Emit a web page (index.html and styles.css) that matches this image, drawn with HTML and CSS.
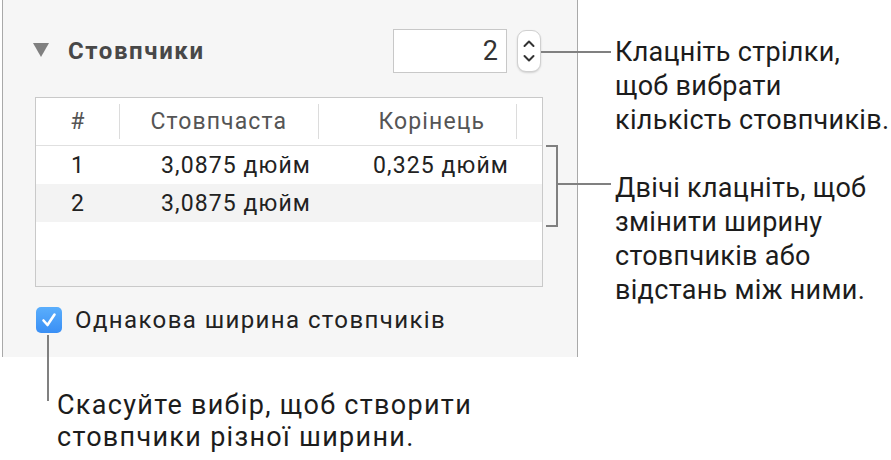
FILE: index.html
```html
<!DOCTYPE html>
<html lang="uk">
  <head>
    <meta charset="UTF-8" />
    <meta name="viewport" content="width=device-width, initial-scale=1.0" />
    <title>Стовпчики</title>
    <link rel="stylesheet" href="styles.css">
  </head>
  <body>
    <div class="page">
      <div class="top">
        <section class="panel">
          <div class="panel-head">
            <svg class="disclosure" width="16" height="14" viewBox="0 0 16 14">
              <polygon points="0,0 16,0 8,14" fill="#808080" />
            </svg>
            <h2 class="panel-title">Стовпчики</h2>
            <div class="count">2</div>
            <div class="stepper">
              <svg width="24" height="42" viewBox="0 0 24 42">
                <polyline points="7.5,16 12,11.5 16.5,16" fill="none" stroke="#333" stroke-width="2" stroke-linecap="round" stroke-linejoin="round" />
                <polyline points="7.5,26 12,30.5 16.5,26" fill="none" stroke="#333" stroke-width="2" stroke-linecap="round" stroke-linejoin="round" />
              </svg>
            </div>
          </div>

          <div class="cols">
            <div class="cols-row cols-head">
              <div class="cell c-num">#</div>
              <div class="cell c-width">Стовпчаста</div>
              <div class="cell c-gap">Корінець</div>
              <div class="cell c-rest"></div>
            </div>
            <div class="cols-row">
              <div class="cell c-num">1</div>
              <div class="cell c-width">3,0875 дюйм</div>
              <div class="cell c-gap">0,325 дюйм</div>
            </div>
            <div class="cols-row alt">
              <div class="cell c-num">2</div>
              <div class="cell c-width">3,0875 дюйм</div>
              <div class="cell c-gap"></div>
            </div>
            <div class="cols-row"></div>
            <div class="cols-row alt short"></div>
          </div>

          <label class="check">
            <span class="check-box">
              <svg width="26" height="26" viewBox="0 0 26 26">
                <polyline points="7.5,13.5 11.5,18 18.5,7.5" fill="none" stroke="#fff" stroke-width="2.6" stroke-linecap="round" stroke-linejoin="round" />
              </svg>
            </span>
            Однакова ширина стовпчиків
          </label>
        </section>

        <div class="notes">
          <p class="note note-arrows">Клацніть стрілки,<br />щоб вибрати<br />кількість стовпчиків.</p>
          <p class="note note-table">Двічі клацніть, щоб<br />змінити ширину<br />стовпчиків або<br />відстань між ними.</p>
        </div>
      </div>

      <p class="note note-check">Скасуйте вибір, щоб створити<br />стовпчики різної ширини.</p>
    </div>
  </body>
</html>
```

FILE: styles.css
```css
* {
  margin: 0px;
  box-sizing: border-box;
}

body {
  background-color: #fff;
  font-family: Roboto, "Liberation Sans", sans-serif;
}

.page {
  width: 891px;
  height: 460px;
  overflow: hidden;
}

.top {
  display: grid;
  grid-template-columns: 578px 1fr;
}

/* inspector panel */

.panel {
  width: 576px;
  height: 357px;
  margin-left: 2px;
  padding: 29px 34px 0px 32px;
  background-color: #f6f6f6;
  border-left: 1px solid #a9a9a9;
  border-right: 1px solid #a9a9a9;
}

.panel-head {
  display: flex;
  align-items: center;
  height: 44px;
}

.disclosure {
  margin-left: -2px;
  margin-top: -2px;
}

.panel-title {
  margin-left: 19px;
  font-size: 24px;
  font-weight: 700;
  letter-spacing: 1.6px;
  color: #484848;
}

.count {
  margin-left: auto;
  width: 114px;
  height: 44px;
  padding-right: 8px;
  background-color: #fff;
  border: 1px solid #c8c8c8;
  text-align: right;
  font-size: 27px;
  line-height: 42px;
  color: #333;
}

.stepper {
  width: 24px;
  height: 42px;
  margin-left: 10px;
  margin-right: 2px;
  background-color: #fff;
  border: 1px solid #d0d0d0;
  border-radius: 9px;
  box-shadow: 0px 1px 2px rgba(0, 0, 0, 0.15);
}

.stepper svg {
  display: block;
  margin: -1px;
}

/* columns list */

.cols {
  margin-top: 24px;
  border: 1px solid #c9c9c9;
  background-color: #fff;
  font-size: 23px;
  letter-spacing: 1.1px;
  color: #222;
}

.cols-row {
  display: flex;
  height: 38px;
  align-items: center;
}

.cols-row.alt {
  background-color: #f3f3f3;
}

.cols-row.short {
  height: 26px;
}

.cols-head {
  height: 48px;
  border-bottom: 1px solid #e0e0e0;
  color: #555;
}

.cell {
  height: 100%;
  display: flex;
  align-items: center;
  justify-content: flex-end;
  padding-right: 8px;
}

.c-num {
  width: 84px;
  justify-content: center;
  padding-right: 0px;
}

.c-width {
  width: 199px;
}

.c-gap {
  width: 198px;
}

.cols-head .cell {
  padding-right: 32px;
  position: relative;
}

.cols-head .c-num {
  padding-right: 0px;
}

.cols-head .c-rest {
  flex: 1;
  padding: 0px;
}

.cols-head .cell::after {
  content: "";
  position: absolute;
  right: 0px;
  top: 6px;
  bottom: 6px;
  width: 1px;
  background-color: #dcdcdc;
}

.cols-head .c-rest::after {
  display: none;
}

/* checkbox */

.check {
  display: flex;
  align-items: center;
  margin-top: 19px;
  font-size: 24px;
  letter-spacing: 1.4px;
  color: #222;
}

.check-box {
  width: 26px;
  height: 26px;
  margin-left: 1px;
  margin-right: 13px;
  border-radius: 5px;
  background: linear-gradient(#5aaefc, #3a8ff5);
}

.check-box svg {
  display: block;
}

/* callouts */

.note {
  position: relative;
  font-size: 27px;
  letter-spacing: 0.3px;
  line-height: 34px;
  white-space: nowrap;
  color: #1c1c1c;
}

.notes {
  padding-left: 37px;
}

.note-arrows {
  margin-top: 35px;
}

.note-arrows::before {
  content: "";
  position: absolute;
  left: -74px;
  top: 16px;
  width: 70px;
  height: 2px;
  background-color: #808080;
}

.note-table {
  margin-top: 34px;
}

.note-table::before {
  content: "";
  position: absolute;
  left: -59px;
  top: 12px;
  width: 55px;
  height: 2px;
  background-color: #808080;
}

.note-table::after {
  content: "";
  position: absolute;
  left: -69px;
  top: -26px;
  width: 10px;
  height: 78px;
  border: 2px solid #808080;
  border-left: none;
}

.note-check {
  margin-top: 32px;
  padding-left: 57px;
  line-height: 32px;
  letter-spacing: 1.3px;
}

.note-check::before {
  content: "";
  position: absolute;
  left: 47px;
  top: -54px;
  width: 2px;
  height: 66px;
  background-color: #808080;
}
```
